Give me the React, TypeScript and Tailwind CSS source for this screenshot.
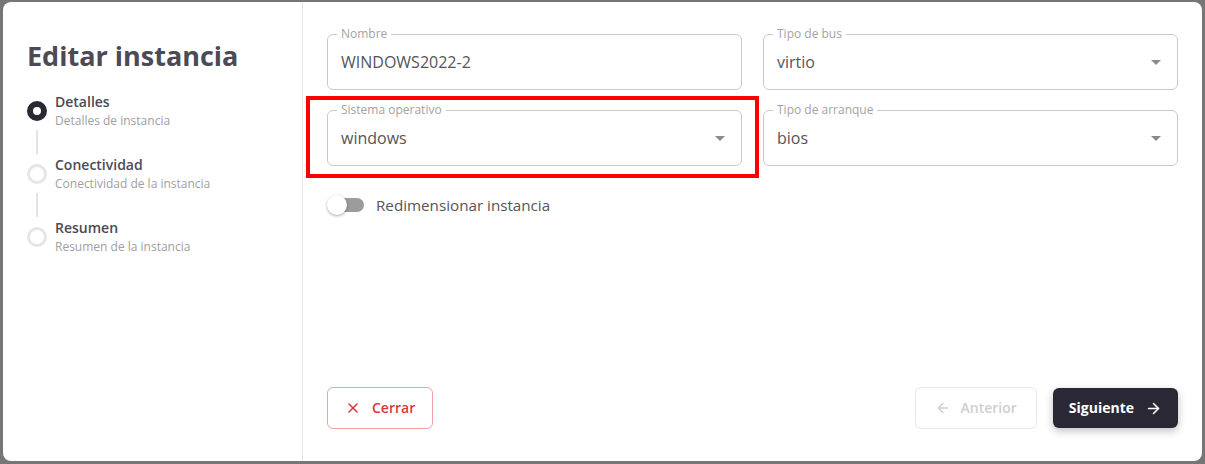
import React from 'react';
import { X, ArrowLeft, ArrowRight } from 'lucide-react';

const font = { fontFamily: '"Open Sans", "Noto Sans", sans-serif' };

const steps = [
  { title: 'Detalles', sub: 'Detalles de instancia', active: true },
  { title: 'Conectividad', sub: 'Conectividad de la instancia', active: false },
  { title: 'Resumen', sub: 'Resumen de la instancia', active: false },
];

const Caret = () => (
  <svg width="10" height="5" viewBox="0 0 10 5" className="shrink-0">
    <path d="M0 0h10L5 5z" fill="#8a8a8a" />
  </svg>
);

const Field: React.FC<{ label: string; value: string; select?: boolean }> = ({ label, value, select }) => (
  <div className="relative h-14 rounded-md border border-[#c9c9c9] flex items-center pl-[13px] pr-[16px]">
    <span className="absolute -top-[9px] left-[9px] bg-white px-[4px] text-xs leading-4 text-[#a3a3a3]">{label}</span>
    <span className="flex-1 text-base text-[#555459]">{value}</span>
    {select && <Caret />}
  </div>
);

export default function App() {
  return (
    <div className="h-screen w-full bg-[#767676] pt-[2px] pl-[3px] pr-[3px] pb-[3px]" style={font}>
      <div className="flex h-[459px] w-[1199px] rounded-lg bg-white overflow-hidden">
        {/* Sidebar */}
        <aside className="w-[300px] shrink-0 border-r border-[#e6e6e6] pl-6 pt-[36px]">
          <h1 className="text-[27px] font-bold leading-9 text-[#4b4a55]">Editar instancia</h1>

          <div className="mt-[18px]">
            {steps.map((s, i) => (
              <div key={s.title}>
                <div className="flex items-center gap-2">
                  {s.active ? (
                    <div className="h-5 w-5 rounded-full border-[6px] border-[#2b2836] bg-white shrink-0" />
                  ) : (
                    <div className="h-5 w-5 rounded-full border-[3px] border-[#e6e6e6] bg-white shrink-0" />
                  )}
                  <div>
                    <div className="text-sm leading-5 font-semibold text-[#4b4a55]">{s.title}</div>
                    <div className="mt-[1px] text-xs leading-4 text-[#a0a0a0]">{s.sub}</div>
                  </div>
                </div>
                {i < steps.length - 1 && <div className="ml-[9px] my-[1px] h-6 w-[2px] bg-[#e3e3e3]" />}
              </div>
            ))}
          </div>
        </aside>

        {/* Main */}
        <main className="relative flex flex-1 flex-col px-6 pt-8 pb-8">
          <div className="grid grid-cols-2 gap-x-[21px] gap-y-5">
            <Field label="Nombre" value="WINDOWS2022-2" />
            <Field label="Tipo de bus" value="virtio" select />
            <Field label="Sistema operativo" value="windows" select />
            <Field label="Tipo de arranque" value="bios" select />
          </div>

          {/* highlight annotation */}
          <div className="absolute left-[3px] top-[94px] h-[82px] w-[453px] border-4 border-[#ff0000] pointer-events-none" />

          <div className="mt-[28px] flex items-center gap-3">
            <div className="relative h-5 w-[37px]">
              <div className="absolute left-[4px] top-[3px] h-[14px] w-[33px] rounded-full bg-[#9c9c9c]" />
              <div className="absolute left-0 top-0 h-5 w-5 rounded-full bg-white shadow-[0_1px_3px_rgba(0,0,0,0.35)]" />
            </div>
            <span className="text-[15.2px] text-[#555459]">Redimensionar instancia</span>
          </div>

          <div className="mt-auto flex items-center">
            <button className="flex h-[42px] items-center gap-[11px] rounded-md border border-[#f0a3a3] px-[17px] text-sm font-semibold text-[#d9373c]">
              <X size={16} strokeWidth={2.25} />
              Cerrar
            </button>
            <div className="ml-auto flex items-center gap-4">
              <button className="flex h-[42px] items-center gap-[10px] rounded-md border border-[#e8e8e8] px-[19px] text-sm font-semibold text-[#cfcfcf]">
                <ArrowLeft size={16} strokeWidth={2} />
                Anterior
              </button>
              <button className="flex h-10 items-center gap-[11px] rounded-md bg-[#2b2836] px-[16px] text-sm font-bold text-white shadow-[0_3px_8px_rgba(0,0,0,0.25)]">
                Siguiente
                <ArrowRight size={17} strokeWidth={2.25} />
              </button>
            </div>
          </div>
        </main>
      </div>
    </div>
  );
}
